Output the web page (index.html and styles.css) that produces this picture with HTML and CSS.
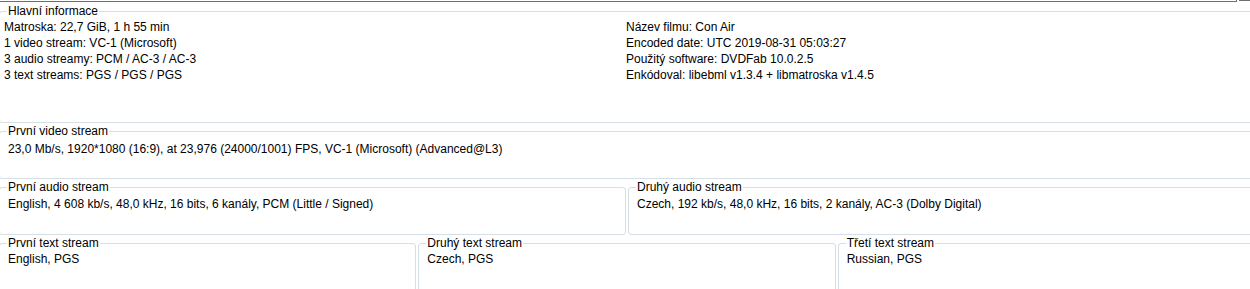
FILE: index.html
```html
<!DOCTYPE html>
<html lang="cs">
<head>
<meta charset="utf-8">
<title>MediaInfo</title>
<link rel="stylesheet" href="styles.css">
</head>
<body>
<div class="window">
  <div class="topbar"><div class="tab-edge"></div><div class="tab-rest"></div></div>

  <fieldset class="group group-main">
    <legend>Hlavní informace</legend>
    <div class="main-grid">
      <div class="col">
        <div>Matroska: 22,7 GiB, 1 h 55 min</div>
        <div>1 video stream: VC-1 (Microsoft)</div>
        <div>3 audio streamy: PCM / AC-3 / AC-3</div>
        <div>3 text streams: PGS / PGS / PGS</div>
      </div>
      <div class="col">
        <div>Název filmu: Con Air</div>
        <div>Encoded date: UTC 2019-08-31 05:03:27</div>
        <div>Použitý software: DVDFab 10.0.2.5</div>
        <div>Enkódoval: libebml v1.3.4 + libmatroska v1.4.5</div>
      </div>
    </div>
  </fieldset>

  <fieldset class="group group-stream">
    <legend>První video stream</legend>
    <div class="content">23,0 Mb/s, 1920*1080 (16:9), at 23,976 (24000/1001) FPS, VC-1 (Microsoft) (Advanced@L3)</div>
  </fieldset>

  <div class="row row-2">
    <fieldset class="group group-stream group-audio">
      <legend>První audio stream</legend>
      <div class="content">English, 4 608 kb/s, 48,0 kHz, 16 bits, 6 kanály, PCM (Little / Signed)</div>
    </fieldset>
    <fieldset class="group group-stream group-audio">
      <legend>Druhý audio stream</legend>
      <div class="content">Czech, 192 kb/s, 48,0 kHz, 16 bits, 2 kanály, AC-3 (Dolby Digital)</div>
    </fieldset>
  </div>

  <div class="row row-3">
    <fieldset class="group group-text">
      <legend>První text stream</legend>
      <div class="content">English, PGS</div>
    </fieldset>
    <fieldset class="group group-text">
      <legend>Druhý text stream</legend>
      <div class="content">Czech, PGS</div>
    </fieldset>
    <fieldset class="group group-text">
      <legend>Třetí text stream</legend>
      <div class="content">Russian, PGS</div>
    </fieldset>
  </div>
</div>
</body>
</html>
```

FILE: styles.css
```css
html, body {
  margin: 0;
  padding: 0;
  background: #ffffff;
  overflow: hidden;
}

body {
  width: 1250px;
  height: 289px;
  font-family: "Liberation Sans", Arial, sans-serif;
  font-size: 12px;
  line-height: 16px;
  color: #000000;
}

.window {
  width: 1256px;
  margin-left: -1px;
}

.topbar {
  display: flex;
  height: 2px;
}

.tab-edge {
  width: 1237px;
  height: 1px;
  border-bottom: 1px solid #6e6e6e;
  border-right: 1px solid #6e6e6e;
}

.tab-rest {
  flex: 1;
  margin-left: 2px;
  border-top: 1px solid #6e6e6e;
}

.group {
  box-sizing: border-box;
  margin: 1px 0 0;
  padding: 0;
  min-width: 0;
  border: 1px solid #d5dfe5;
  border-radius: 3px;
}

.group legend {
  margin-left: 7px;
  padding: 0 1px;
  font-size: 12px;
  line-height: 14px;
}

.group-main {
  margin-top: 2px;
  height: 119px;
}

.main-grid {
  display: grid;
  grid-template-columns: 622px 1fr;
  padding: 1px 0 0 4px;
}

.group-stream {
  height: 55px;
}

.group-text {
  height: 60px;
}

.content {
  padding: 3px 0 0 8px;
  white-space: nowrap;
}

.group-audio .content {
  padding-top: 2px;
}

.group-text .content {
  padding-top: 1px;
}

.row {
  display: grid;
  column-gap: 2px;
}

.row-2 {
  grid-template-columns: 1fr 1fr;
}

.row-3 {
  grid-template-columns: 1fr 1fr 1fr;
}
```
